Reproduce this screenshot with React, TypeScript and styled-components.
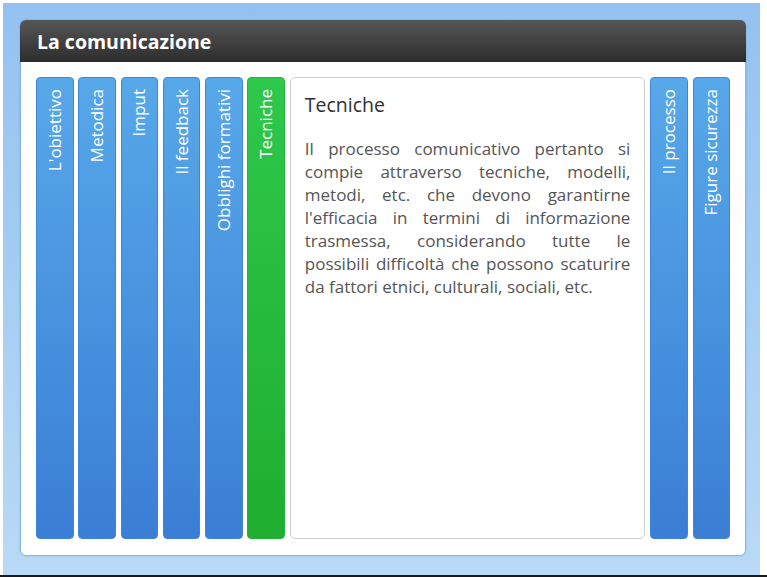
import styled, { createGlobalStyle } from "styled-components";

const GlobalStyle = createGlobalStyle`
  html, body {
    margin: 0;
    padding: 0;
    background: #ffffff;
    font-family: "Open Sans", "Liberation Sans", sans-serif;
  }
  * { box-sizing: border-box; }
`;

const Page = styled.div`
  width: 767px;
  height: 577px;
  padding: 3px 7px 0 3px;
  display: flex;
  flex-direction: column;
`;

const Backdrop = styled.div`
  flex: 1;
  background: linear-gradient(to bottom, #93c2f0 0%, #b9d9f6 100%);
  padding: 17px 14px 19px 17px;
  display: flex;
`;

const BottomLine = styled.div`
  height: 2px;
  margin: 0 -7px 0 -3px;
  background: #1a1a1a;
`;

const Panel = styled.div`
  flex: 1;
  display: flex;
  flex-direction: column;
  border-radius: 6px;
  background: #ffffff;
  border: 1px solid #86b5e8;
  box-shadow: 0 0 2px rgba(60, 120, 200, 0.3);
`;

const Header = styled.div`
  height: 42px;
  margin: -1px -1px 0;
  border-radius: 6px 6px 0 0;
  background: linear-gradient(to bottom, #565656 0%, #2d2d2d 100%);
  color: #ffffff;
  font-size: 19.5px;
  font-weight: 700;
  display: flex;
  align-items: center;
  padding: 0 17px;
`;

const Body = styled.div`
  flex: 1;
  display: flex;
  gap: 4.8px;
  padding: 15px 15px 16px 15px;
`;

const Tab = styled.div<{ $active?: boolean }>`
  width: 37.5px;
  flex: none;
  border-radius: 4px;
  border: 1px solid ${(p) => (p.$active ? "#24b23a" : "#3f86d8")};
  background: ${(p) =>
    p.$active
      ? "linear-gradient(to bottom, #2ec84c 0%, #1fae2f 100%)"
      : "linear-gradient(to bottom, #57a8e9 0%, #3a7ed5 100%)"};
  display: flex;
  justify-content: center;
  align-items: flex-start;
  padding-top: 11px;
`;

const TabLabel = styled.span`
  writing-mode: vertical-rl;
  transform: rotate(180deg);
  color: #ffffff;
  font-size: 17px;
  line-height: 20px;
  white-space: nowrap;
`;

const Content = styled.div`
  flex: 1;
  border: 1px solid #cfcfcf;
  border-radius: 5px;
  padding: 14px 14px 14px 14px;
  color: #4f4f4f;
`;

const Title = styled.h2`
  margin: 0 0 19px;
  font-size: 19.5px;
  font-weight: 400;
  color: #2f2f2f;
  line-height: 26px;
`;

const Text = styled.p`
  margin: 0;
  font-size: 17px;
  line-height: 23px;
  text-align: justify;
  color: #555555;
`;

const leftTabs = [
  "L'obiettivo",
  "Metodica",
  "Imput",
  "Il feedback",
  "Obblighi formativi",
  "Tecniche",
];
const rightTabs = ["Il processo", "Figure sicurezza"];

export default function App() {
  return (
    <>
      <GlobalStyle />
      <Page>
        <Backdrop>
          <Panel>
            <Header>La comunicazione</Header>
            <Body>
              {leftTabs.map((t) => (
                <Tab key={t} $active={t === "Tecniche"}>
                  <TabLabel>{t}</TabLabel>
                </Tab>
              ))}
              <Content>
                <Title>Tecniche</Title>
                <Text>
                  Il processo comunicativo pertanto si compie attraverso
                  tecniche, modelli, metodi, etc. che devono garantirne
                  l'efficacia in termini di informazione trasmessa,
                  considerando tutte le possibili difficoltà che possono
                  scaturire da fattori etnici, culturali, sociali, etc.
                </Text>
              </Content>
              {rightTabs.map((t) => (
                <Tab key={t}>
                  <TabLabel>{t}</TabLabel>
                </Tab>
              ))}
            </Body>
          </Panel>
        </Backdrop>
        <BottomLine />
      </Page>
    </>
  );
}
